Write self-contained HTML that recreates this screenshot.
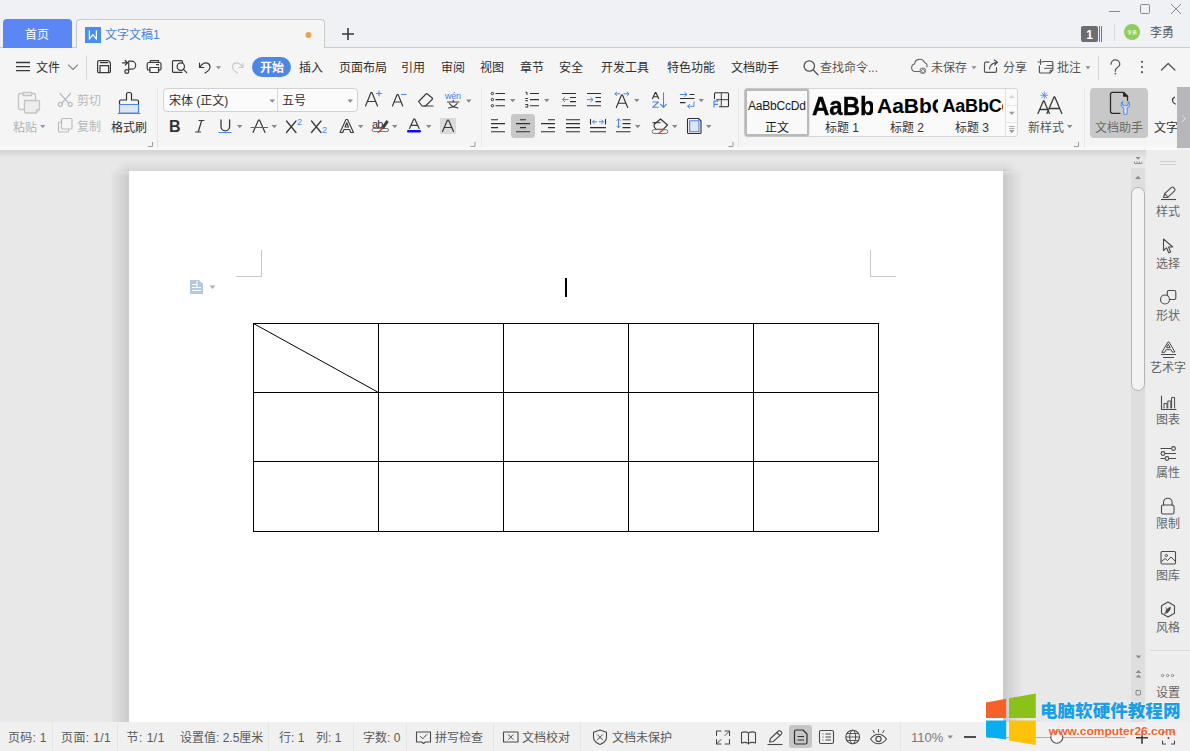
<!DOCTYPE html>
<html lang="zh-CN">
<head>
<meta charset="utf-8">
<title>文字文稿1</title>
<style>
*{box-sizing:border-box;margin:0;padding:0}
html,body{width:1190px;height:751px;overflow:hidden;background:#f5f5f5}
body{font-family:"Liberation Sans","Noto Sans CJK SC",sans-serif;font-size:12px;color:#333;position:relative}
.abs{position:absolute}
.t{position:absolute;white-space:nowrap;line-height:1}
svg{position:absolute;overflow:visible}
/* title bar */
#titlebar{left:0;top:0;width:1190px;height:47px;background:#f0f1f5}
#tabline{left:0;top:47px;width:1190px;height:1px;background:#cbcbcf}
#hometab{left:3px;top:19px;width:69px;height:29px;background:#5b87f5;border-radius:4px 4px 0 0}
#doctab{left:76px;top:19px;width:249px;height:29px;background:#f5f5f5;border:1px solid #c9c9cd;border-bottom:none;border-radius:4px 4px 0 0}
/* toolbar */
#toolbar{left:0;top:48px;width:1190px;height:102px;background:#f5f5f5}
#tbglow{left:0;top:144px;width:1177px;height:6px;background:linear-gradient(#f5f5f5,#fafafa)}
/* workspace */
#work{left:0;top:150px;width:1146px;height:572px;background:#e8e8e8}
#workshadow{left:0;top:150px;width:1146px;height:8px;background:linear-gradient(rgba(0,0,0,.09),rgba(0,0,0,0))}
#page{left:129px;top:171px;width:874px;height:560px;background:#fff}
#shl{left:109px;top:168px;width:20px;height:560px;background:linear-gradient(to right,rgba(0,0,0,0),rgba(0,0,0,.13));-webkit-mask-image:linear-gradient(transparent,#000 8px)}
#shr{left:1003px;top:168px;width:20px;height:560px;background:linear-gradient(to left,rgba(0,0,0,0),rgba(0,0,0,.13));-webkit-mask-image:linear-gradient(transparent,#000 8px)}
#sht{left:115px;top:159px;width:902px;height:12px;background:linear-gradient(rgba(0,0,0,0),rgba(0,0,0,.07));-webkit-mask-image:linear-gradient(to right,transparent,#000 14px,#000 888px,transparent)}
/* scrollbar */
#scroll{left:1131px;top:168px;width:14px;height:554px;background:#dedede}
#thumb{left:1131px;top:187px;width:14px;height:204px;background:#f3f3f3;border:1px solid #b4b4b4;border-radius:7px}
/* sidebar */
#side{left:1146px;top:150px;width:44px;height:572px;background:#ededed}
/* status */
#status{left:0;top:722px;width:1190px;height:29px;background:#f0f0f0}
</style>
</head>
<body>
<div class="abs" id="titlebar"></div>
<div class="abs" id="tabline"></div>
<div class="abs" id="hometab"></div>
<div class="abs" id="doctab"></div>
<div class="abs" id="toolbar"></div>
<div class="abs" id="tbglow"></div>
<div class="abs" id="work"></div>
<div class="abs" id="shl"></div><div class="abs" id="shr"></div><div class="abs" id="sht"></div>
<div class="abs" id="page"></div>
<div class="abs" id="workshadow"></div>
<div class="abs" id="scroll"></div>
<div class="abs" id="thumb"></div>
<div class="abs" id="side"></div>
<div class="abs" id="status"></div>

<!-- TITLE -->
<div class="t" style="left:25px;top:29px;font-size:12px;color:#fff">首页</div>
<svg style="left:85px;top:27px" width="16" height="16" viewBox="0 0 16 16"><rect width="16" height="16" fill="#4a8df1"/><path d="M4.400 3.600V12.200L7.900 7.600L11.400 12.200V3.600" stroke="#fff" stroke-width="1.200" fill="none" stroke-linejoin="round"/></svg>
<div class="t" style="left:105px;top:29px;font-size:12px;color:#4a7fdc">文字文稿1</div>
<svg style="left:0;top:0" width="1190" height="48" viewBox="0 0 1190 48">
 <circle cx="308.5" cy="35" r="3" fill="#e9a255"/>
 <path d="M342 34h12M348 28v12" stroke="#3a3a3a" stroke-width="1.6" fill="none"/>
 <path d="M1109 11.5h11" stroke="#8a8a8c" stroke-width="1" fill="none"/>
 <rect x="1140.5" y="4.500" width="9" height="9" rx="1" stroke="#8a8a8c" stroke-width="1" fill="none"/>
 <path d="M1171 4l10 10M1181 4l-10 10" stroke="#8a8a8c" stroke-width="1" fill="none"/>
 <rect x="1081" y="26" width="17" height="16" rx="2" fill="#6d6d70"/>
 <path d="M1099.500 26v16M1101.500 26v16" stroke="#77777a" stroke-width="1"/>
 <path d="M1114.500 24v17" stroke="#dadadc" stroke-width="1"/>
 <circle cx="1132" cy="32" r="8" fill="#90cc5c"/>
 <text x="1132" y="33.800" font-size="5" fill="#fff" text-anchor="middle" font-family="Liberation Sans, Noto Sans CJK SC, sans-serif">李勇</text>
 <text x="1089.500" y="38.500" font-size="12" font-weight="bold" fill="#fff" text-anchor="middle" font-family="Liberation Sans, sans-serif">1</text>
</svg>
<div class="t" style="left:1150px;top:27px;font-size:12px;color:#555">李勇</div>
<!-- MENU -->
<div class="abs" style="left:252px;top:57px;width:39px;height:20px;border-radius:10px;background:#4e86e6"></div>
<div class="t" style="left:260px;top:62px;color:#fff;font-weight:bold">开始</div>
<div class="t" style="left:36px;top:62px;color:#2f2f2f">文件</div>
<div class="t" style="left:299px;top:62px;color:#2f2f2f">插入</div>
<div class="t" style="left:339px;top:62px;color:#2f2f2f">页面布局</div>
<div class="t" style="left:401px;top:62px;color:#2f2f2f">引用</div>
<div class="t" style="left:441px;top:62px;color:#2f2f2f">审阅</div>
<div class="t" style="left:480px;top:62px;color:#2f2f2f">视图</div>
<div class="t" style="left:520px;top:62px;color:#2f2f2f">章节</div>
<div class="t" style="left:559px;top:62px;color:#2f2f2f">安全</div>
<div class="t" style="left:601px;top:62px;color:#2f2f2f">开发工具</div>
<div class="t" style="left:667px;top:62px;color:#2f2f2f">特色功能</div>
<div class="t" style="left:731px;top:62px;color:#2f2f2f">文档助手</div>
<div class="t" style="left:820px;top:62px;color:#555">查找命令...</div>
<div class="t" style="left:931px;top:62px;color:#555">未保存</div>
<div class="t" style="left:1003px;top:62px;color:#555">分享</div>
<div class="t" style="left:1057px;top:62px;color:#555">批注</div>
<svg style="left:0;top:48px" width="1190" height="38" viewBox="0 48 1190 38" fill="none" stroke="#3a3a3a" stroke-width="1.2" stroke-linecap="round" stroke-linejoin="round">
 <path d="M16 62.500h14M16 66.600h14M16 70.700h14" stroke-width="1.300" stroke-linecap="butt"/>
 <path d="M68.500 65l4.500 4.500l4.500-4.500" stroke="#8a8a8a" stroke-width="1.100"/>
 <path d="M86.500 55.500v24" stroke="#d6d6d6" stroke-width="1" stroke-linecap="butt"/>
 <!-- save -->
 <path d="M97.600 71.600v-9.600q0-1.400 1.400-1.400h8.600q.8 0 1.400.6l.8.800q.6.600.6 1.400v8.200q0 1-1 1h-10.800q-1 0-1-1z"/>
 <path d="M100 72.400v-6.800h8.600v6.800M100.500 62.600h7.300"/>
 <!-- export -->
 <path d="M122.500 62.800h4.800M125.200 60.500l2.400 2.300l-2.400 2.300"/>
 <path d="M128.700 61.200h3a4 4 0 0 1 0 8h-3M128.700 61.200v9"/>
 <circle cx="126.800" cy="71.500" r="1.900"/>
 <!-- print -->
 <path d="M150.300 62.500v-1.800h8.200v1.800M150 70h-1.200q-1.600 0-1.600-1.600v-4.300q0-1.600 1.600-1.600h10.600q1.600 0 1.600 1.600v4.300q0 1.600-1.600 1.600h-1.200"/>
 <path d="M149.800 67.500h8.900v4q0 1-1 1h-6.900q-1 0-1-1zM156.500 64.700h2"/>
 <!-- preview -->
 <path d="M182 72.300h-8.500q-1 0-1-1v-9.700q0-1 1-1h8q1 0 1 1v1.300"/>
 <circle cx="180.800" cy="66.600" r="3.700"/>
 <path d="M183.500 69.400l3.200 3.300"/>
 <!-- undo -->
 <path d="M199.500 63.200v4.300h4.300"/>
 <path d="M200 67q2.500-4.400 6.400-4.200a4 4 0 0 1 3.600 4.400q-.3 3.200-5 5.800"/>
 <path d="M216 66.200h5l-2.500 3z" fill="#8a8a8a" stroke="none"/>
 <!-- redo -->
 <g stroke="#c9c9c9"><path d="M243 63.200v4.300h-4.300"/><path d="M242.500 67q-2.500-4.400-6.400-4.200a4 4 0 0 0-3.600 4.400q.3 3.200 5 5.800"/></g>
 <!-- search -->
 <g stroke="#555" stroke-width="1.300"><circle cx="809.300" cy="66" r="5.200"/><path d="M813.200 70l4.800 4.800"/></g>
 <!-- cloud -->
 <g stroke="#666" stroke-width="1.100"><path d="M919.500 71.500h-4.300a3.800 3.800 0 0 1-.6-7.500a5.200 5.200 0 0 1 10-1.400a3.800 3.800 0 0 1 2.300 4.400"/></g>
 <circle cx="922.800" cy="70.800" r="3.300" fill="#8c8c8c" stroke="none"/>
 <path d="M921.500 69.500l2.600 2.600M924.100 69.500l-2.600 2.600" stroke="#fff" stroke-width=".9"/>
 <path d="M971.500 66.200h5l-2.500 3z" fill="#8a8a8a" stroke="none"/>
 <!-- share -->
 <g stroke="#555" stroke-width="1.200"><path d="M989 62.200h-3.200q-1.300 0-1.300 1.300v7.500q0 1.300 1.300 1.300h9.400q1.300 0 1.300-1.300v-3.500"/><path d="M989.500 69q.3-5.800 7.700-6.600M994.300 60l3.200 2.300l-2.800 2.800"/></g>
 <!-- comment -->
 <g stroke="#555" stroke-width="1.200"><path d="M1043.500 61.500h8q1.300 0 1.300 1.300v7.400l-2.800 2.800h-9.300q-1.300 0-1.300-1.300v-5.700"/><path d="M1038 62h5M1040.500 59.500v5M1044.500 68.300h7.500M1047 65.500h5" stroke-width="1"/><path d="M1052.600 70.300h-2.500v2.500" stroke-width="1"/></g>
 <path d="M1085.500 66.200h5l-2.500 3z" fill="#8a8a8a" stroke="none"/>
 <path d="M1098.500 56v24" stroke="#d6d6d6" stroke-width="1" stroke-linecap="butt"/>
 <!-- help -->
 <path d="M1111 64.200a4.400 4.400 0 0 1 8.800 0q0 2-2.400 3.300q-2 1.100-2 3.200v.5" stroke="#555" stroke-width="1.300"/>
 <circle cx="1115.400" cy="73.600" r=".9" fill="#555" stroke="none"/>
 <g fill="#555" stroke="none"><circle cx="1142" cy="61.800" r="1.100"/><circle cx="1142" cy="67" r="1.100"/><circle cx="1142" cy="72.200" r="1.100"/></g>
 <path d="M1161.500 70l6.700-6.500l6.700 6.500" stroke="#555" stroke-width="1.300"/>
</svg>
<!-- RIBBON -->
<div class="t" style="left:13px;top:122px;color:#b3b3b3">粘贴</div>
<div class="t" style="left:77px;top:95px;color:#b8b8b8">剪切</div>
<div class="t" style="left:77px;top:121px;color:#b8b8b8">复制</div>
<div class="t" style="left:111px;top:122px;color:#2f2f2f">格式刷</div>
<div class="abs" style="left:163px;top:88px;width:195px;height:24px;border:1px solid #d2d2d2;border-radius:4px;background:#fbfbfb"></div>
<div class="abs" style="left:277px;top:89px;width:1px;height:22px;background:#d8d8d8"></div>
<div class="t" style="left:169px;top:95px;color:#2f2f2f">宋体 (正文)</div>
<div class="t" style="left:282px;top:95px;color:#2f2f2f">五号</div>
<svg style="left:0;top:86px" width="480" height="64" viewBox="0 86 480 64" fill="none" stroke="#3a3a3a" stroke-width="1.200" stroke-linecap="round" stroke-linejoin="round">
 <!-- paste (disabled) -->
 <g stroke="#c4c4c4" stroke-width="1.300">
  <path d="M24 109.500h-3.500q-2 0-2-2v-12q0-2 2-2h2M31.500 93.500h2q2 0 2 2v4"/>
  <path d="M23 92.500h8.500v3h-8.500z"/>
  <path d="M24.500 100.500h13.500q1.500 0 1.500 1.500v7.500l-3.500 3.500h-10q-1.500 0-1.500-1.500z" fill="#ededed"/>
  <path d="M39.300 109.600h-3v3" stroke-width="1"/>
 </g>
 <path d="M40 125h5.500l-2.750 3.200z" fill="#9a9a9a" stroke="none"/>
 <!-- cut -->
 <g stroke="#bcbcbc" stroke-width="1.200">
  <path d="M60 93.500l9 10M70.500 93.500l-9 10"/><circle cx="60.300" cy="104.300" r="2"/><circle cx="70.200" cy="104.300" r="2"/>
 </g>
 <!-- copy -->
 <g stroke="#bcbcbc" stroke-width="1.200">
  <path d="M62.500 118.500h8.500q1 0 1 1v8.500q0 1-1 1h-8.500q-1 0-1-1v-8.500q0-1 1-1z"/>
  <path d="M61.500 122h-2q-1 0-1 1v8q0 1 1 1h8q1 0 1-1v-2"/>
 </g>
 <!-- format painter -->
 <path d="M119.500 104.500v-3q0-1.500 1.500-1.500h5.500v-5.500q0-2 2-2h1q2 0 2 2v5.500h5.500q1.500 0 1.500 1.500v3" stroke="#2f2f2f" stroke-width="1.200"/>
 <path d="M119.500 104.500h19v8.500h-19z" fill="#dfe6f3" stroke="#4a86e8" stroke-width="1.200"/>
 <path d="M118 113.500h22" stroke="#4a86e8" stroke-width="1.200"/>
 <!-- group marker -->
 <path d="M148 146.500h4.500v-4.500" stroke="#9c9c9c" stroke-width="1" stroke-linecap="butt" stroke-linejoin="miter"/>
 <path d="M157.500 88v60" stroke="#e6e6e6" stroke-width="1" stroke-linecap="butt"/>
 <!-- combo arrows -->
 <path d="M269.500 99.500h5.500l-2.750 3.200zM347.500 99.500h5.500l-2.750 3.200z" fill="#8a8a8a" stroke="none"/>
 <!-- A+ -->
 <path d="M365.500 106l5.500-13.500h1l5.500 13.500M367.500 101.500h8" stroke-width="1.200"/>
 <path d="M376.500 93.500h5M379 91v5" stroke="#4a86e8" stroke-width="1"/>
 <!-- A- -->
 <path d="M392.500 106l4.600-11.500h1l4.600 11.500M394.300 102h6.400" stroke-width="1.200"/>
 <path d="M401.500 94.500h4.500" stroke="#4a86e8" stroke-width="1"/>
 <!-- eraser -->
 <path d="M418.600 101.500l7.400-7.500q.7-.7 1.400 0l4.800 4q.7.700 0 1.400l-6.700 6.600h-3.400z" stroke-width="1.200"/>
 <path d="M424 106h9" stroke-width="1.200"/>
 <!-- wen arrow -->
 <path d="M466 99.500h5.500l-2.750 3.200z" fill="#8a8a8a" stroke="none"/>
 <path d="M447.500 102h11.500" stroke-width="1.100"/><path d="M449.500 103.500q1.500 3 8.500 4.500M457 103.500q-1.500 3-8.500 4.500M453.200 100.300v1.500" stroke-width="1.100"/>
 <!-- row2 -->
 <!-- I -->
 <path d="M199 120.500h5M195.500 132h5M201.700 120.500l-3.500 11.500" stroke-width="1.200"/>
 <!-- U -->
 <path d="M221 120v6.500a4.300 4.300 0 0 0 8.600 0v-6.500" stroke-width="1.300"/>
 <path d="M219 132.500h12" stroke="#4a86e8" stroke-width="1.200"/>
 <path d="M237 125h5.500l-2.750 3.200zM271.500 125h5.500l-2.750 3.200zM358 125h5.500l-2.750 3.200zM392 125h5.500l-2.750 3.200zM426 125h5.500l-2.750 3.200z" fill="#8a8a8a" stroke="none"/>
 <!-- A strike -->
 <path d="M253 132.500l5.500-12.500h1l5.500 12.500" stroke-width="1.200"/>
 <path d="M251 127.500h16.500" stroke="#d9352c" stroke-width="1.200"/>
 <!-- X2 sup -->
 <path d="M286.500 121l9.500 11.500M296 121l-9.500 11.500" stroke-width="1.300"/>
 <!-- X2 sub -->
 <path d="M311.500 121l9.500 11.500M321 121l-9.500 11.500" stroke-width="1.300"/>
 <!-- A outline -->
 <path d="M340 132.500l6-13h1.500l6 13h-2.800l-1.200-3h-5.500l-1.200 3zM345 127h3.500l-1.750-4.300z" stroke-width="1.100"/>
 <!-- highlighter ab -->
 <path d="M373.500 128.500h13.500q1.500 0 1.500 1.500t-1.500 1.500h-13.500q-1.500 0-1.500-1.500t1.500-1.500z" stroke="#7a7a7a" stroke-width="1"/>
 <path d="M378 132.500l5-4.500" stroke="#d9352c" stroke-width="1.100"/>
 <path d="M382 127l4.500-6.500l1.800 1.300l-4.300 6.500z" fill="#3a3a3a" stroke-width=".8"/>
 <!-- A blue underline -->
 <path d="M409.500 128.500l4.300-9.500h1l4.300 9.500M411 125.300h6.600" stroke-width="1.200"/>
 <path d="M408.200 131.300h11.600" stroke="#0a0aff" stroke-width="2.400"/>
 <!-- A shaded -->
 <rect x="440" y="118" width="16" height="16" fill="#dadada" stroke="none"/>
 <path d="M442.500 131.500l5-11.500h1l5 11.500M444.300 127.500h7.400" stroke-width="1.200"/>
 <path d="M470.500 146.500h4.500v-4.500" stroke="#9c9c9c" stroke-width="1" stroke-linecap="butt" stroke-linejoin="miter"/>
</svg>
<div class="t" style="left:169px;top:119px;font-size:16px;font-weight:bold;color:#333;font-family:'Liberation Sans',sans-serif">B</div>
<div class="t" style="left:297px;top:118px;font-size:9px;color:#4a86e8">2</div>
<div class="t" style="left:322px;top:126px;font-size:9px;color:#4a86e8">2</div>
<div class="t" style="left:445px;top:92px;font-size:9px;color:#3f7fe8;letter-spacing:-.3px">wén</div>
<div class="t" style="left:372px;top:119px;font-size:11px;color:#333;letter-spacing:-.8px">ab</div>
<svg style="left:480px;top:86px" width="262" height="64" viewBox="480 86 262 64" fill="none" stroke="#2f2f2f" stroke-width="1.100" stroke-linecap="butt" stroke-linejoin="round">
 <path d="M481.500 88v60" stroke="#ebebeb" stroke-width="1"/>
 <!-- bullets -->
 <g stroke-width="1"><circle cx="492.400" cy="93.500" r="1.200"/><circle cx="492.400" cy="99.600" r="1.200"/><circle cx="492.400" cy="105.700" r="1.200"/></g>
 <path d="M495.500 93.500h9.500M495.500 99.600h9.500M495.500 105.700h9.500"/>
 <path d="M510 99h5.500l-2.750 3.200zM544 99h5.500l-2.750 3.200zM634 99h5.500l-2.750 3.200zM698.500 99h5.500l-2.750 3.200zM635 125h5.500l-2.750 3.200zM672 125h5.500l-2.750 3.200zM706 125h5.500l-2.750 3.200z" fill="#8a8a8a" stroke="none"/>
 <!-- numbering -->
 <path d="M530 93.500h9M530 99.600h9M530 105.700h9"/>
 <path d="M525.500 92.300h1.500v2.700M525.300 98.500h2.600M525.300 100.700h2.600M525.300 104.500h2.500v2.500h-2.500" stroke-width="1"/>
 <!-- decrease indent -->
 <path d="M562 93.500h14M570 97.500h6M570 101.600h6M562 105.700h14"/>
 <path d="M562.500 99.600h6M565 97.200l-2.500 2.400l2.500 2.400" stroke="#4a86e8" stroke-width="1"/>
 <!-- increase indent -->
 <path d="M587 93.500h14M595.500 97.500h5.500M595.500 101.600h5.500M587 105.700h14"/>
 <path d="M587 99.600h6M590.500 97.200l2.500 2.400l-2.500 2.400" stroke="#4a86e8" stroke-width="1"/>
 <!-- A spacing -->
 <path d="M616.300 107.500l5.200-12.500h1l5.200 12.500M618 103.300h8" stroke-linecap="round"/>
 <path d="M614.800 93.800h5.500M617 91.800l-2.200 2l2.200 2M623.500 93.800h5.500M626.800 91.800l2.200 2l-2.200 2" stroke="#4a86e8" stroke-width="1"/>
 <!-- AZ -->
 <path d="M652.300 99l3-6.500h.6l3 6.500M653.300 96.800h4.600" stroke-width="1.100"/>
 <path d="M652.500 102h6l-6 5.300h6.300" stroke="#4a86e8" stroke-width="1.100"/>
 <path d="M663.500 92.500v14.500M660.300 104l3.200 3.300l3.200-3.300" stroke="#4a86e8" stroke-width="1.100"/>
 <!-- line break -->
 <path d="M689.500 94.500h5M680 98.500h14.500M680 102.600h5.500"/>
 <path d="M680 94.500h7M684.500 92.300l2.500 2.200l-2.500 2.200M694 101.500v4.800h-6.500M690 104l-2.500 2.300l2.500 2.300" stroke="#4a86e8" stroke-width="1"/>
 <!-- table -->
 <path d="M716.500 92.800h11q1 0 1 1v12q0 1-1 1h-8.500M714.500 99v-5.200q0-1 1-1h1"/>
 <path d="M721.300 93v13.500M716 99.700h12.500" stroke-width=".9"/>
 <path d="M714 107.500v-6.300h4.500M714 104.300h4" stroke="#4a86e8" stroke-width="1.200"/>
 <!-- align left -->
 <path d="M491 119.700h7M491 123.600h14M491 127.600h7M491 131.700h14"/>
 <!-- center -->
 <rect x="511" y="114" width="24" height="24" rx="3" fill="#c8c8c8" stroke="none"/>
 <path d="M520 119.700h6M516 123.600h14M520 127.600h6M516 131.700h14"/>
 <!-- right -->
 <path d="M548 119.700h7M541 123.600h14M548 127.600h7M541 131.700h14"/>
 <!-- justify -->
 <path d="M566 119.700h14M566 123.600h14M566 127.600h14M566 131.700h14"/>
 <!-- distribute -->
 <path d="M590.500 119v5.500M605.500 119v5.500M590 127.600h16M590 131.700h16"/>
 <path d="M592.500 121.800h4.500M594.500 119.800l-2 2l2 2M599 121.800h4.500M601.500 119.800l2 2l-2 2" stroke="#4a86e8" stroke-width="1"/>
 <!-- line spacing -->
 <path d="M622.500 119.700h8M622.500 123.600h8M622.500 127.600h8M616 131.700h14.500"/>
 <path d="M618.500 118.800v9M616.500 120.800l2-2l2 2M616.500 125.800l2 2l2-2" stroke="#4a86e8" stroke-width="1"/>
 <!-- shading bucket -->
 <path d="M654 124.500l6.500-5.500l7 6l-4 4.200h-7.500q-2.500-2-2-4.700z" stroke-linejoin="round"/>
 <path d="M652.500 122.700h8" stroke-width="1"/>
 <path d="M654 129.700h12q1.800 0 1.800 1.900t-1.800 1.900h-12q-1.800 0-1.800-1.900t1.800-1.900z" stroke="#7a7a7a" stroke-width="1"/>
 <path d="M658.500 133.500l5-3.800" stroke="#d9352c" stroke-width="1.100"/>
 <!-- border -->
 <path d="M688.500 118.500h10l2.500 2.500v11.500q0 1-1 1h-11.500q-1 0-1-1v-13q0-1 1-1z"/>
 <rect x="689.700" y="120.700" width="9.200" height="11" fill="#dfe6f3" stroke="#4a86e8" stroke-width="1.100"/>
 <path d="M728.500 146.500h4.500v-4.500" stroke="#9c9c9c" stroke-width="1"/>
 <path d="M738.500 88v60" stroke="#e6e6e6" stroke-width="1"/>
</svg>
<div class="abs" style="left:744px;top:88px;width:274px;height:49px;border:1px solid #d6d6d6;border-radius:3px;background:#fafafa"></div>
<div class="abs" style="left:745px;top:89px;width:64px;height:47px;border:2px solid #b9b9b9;border-radius:2px;background:#f9f9f9;box-shadow:0 0 2px rgba(0,0,0,.25)"></div>
<div class="abs" style="left:1005px;top:89px;width:1px;height:47px;background:#e2e2e2"></div>
<div class="abs" style="left:1006px;top:105px;width:11px;height:1px;background:#e6e6e6"></div>
<div class="abs" style="left:1006px;top:122px;width:11px;height:1px;background:#e6e6e6"></div>
<div class="t" style="left:748px;top:100px;font-family:'Liberation Sans',sans-serif;font-size:12px;color:#1a1a1a;letter-spacing:-.2px">AaBbCcDd</div>
<div class="t" style="left:765px;top:122px;color:#1a1a1a">正文</div>
<div class="abs" style="left:811px;top:90px;width:62px;height:30px;overflow:hidden"><div class="t" style="left:1px;top:3.500px;font-family:'Liberation Sans',sans-serif;font-size:24px;font-weight:bold;color:#000;-webkit-text-stroke:.3px #000;transform:scale(1,1.05);transform-origin:0 0">AaBb</div></div>
<div class="abs" style="left:876px;top:90px;width:62px;height:30px;overflow:hidden"><div class="t" style="left:1px;top:4.500px;font-family:'Liberation Sans',sans-serif;font-size:21px;font-weight:bold;color:#000">AaBbC</div></div>
<div class="abs" style="left:941px;top:90px;width:62px;height:30px;overflow:hidden"><div class="t" style="left:1.500px;top:7px;letter-spacing:-.2px;font-family:'Liberation Sans',sans-serif;font-size:18px;font-weight:bold;color:#000">AaBbCc</div></div>
<div class="t" style="left:825px;top:122px;color:#333">标题 1</div>
<div class="t" style="left:890px;top:122px;color:#333">标题 2</div>
<div class="t" style="left:955px;top:122px;color:#333">标题 3</div>
<div class="t" style="left:1028px;top:122px;color:#555">新样式</div>
<div class="abs" style="left:1090px;top:88px;width:58px;height:50px;border-radius:4px;background:#c8c8c8"></div>
<div class="t" style="left:1095px;top:122px;color:#6a6a6a">文档助手</div>
<div class="t" style="left:1154px;top:122px;color:#333">文字</div>
<div class="abs" style="left:1177px;top:87px;width:13px;height:61px;background:#b7b7bb"></div>
<svg style="left:1000px;top:86px" width="190" height="64" viewBox="1000 86 190 64" fill="none" stroke="#3a3a3a" stroke-width="1.200" stroke-linecap="round" stroke-linejoin="round">
 <path d="M1009 98h5.500l-2.750-3.200z" fill="#d4d4d4" stroke="none"/>
 <path d="M1009 111.800h5.500l-2.750 3.200z" fill="#9a9a9a" stroke="none"/>
 <path d="M1009 130h5.500l-2.750 3.200z" fill="#9a9a9a" stroke="none"/>
 <path d="M1009 126.500h5.500M1009 128.500h5.500" stroke="#9a9a9a" stroke-width=".8" stroke-linecap="butt"/>
 <!-- new style -->
 <path d="M1038 113.500l5.300-12.500h.8l5.300 12.500M1040 109.500h7.400" stroke-width="1.300"/>
 <path d="M1047 113.500l7-16.500h.8l7 16.500M1049.500 108.500h10" stroke-width="1.300"/>
 <path d="M1044.300 91.800v7M1040.800 95.300h7M1041.800 92.800l5 5M1046.800 92.800l-5 5" stroke="#4a86e8" stroke-width=".8"/>
 <path d="M1067 125h5.500l-2.750 3.200z" fill="#8a8a8a" stroke="none"/>
 <path d="M1074 146.500h4.500v-4.500" stroke="#9c9c9c" stroke-width="1" stroke-linecap="butt" stroke-linejoin="miter"/>
 <path d="M1084.500 88v60" stroke="#e6e6e6" stroke-width="1" stroke-linecap="butt"/>
 <!-- doc assistant -->
 <path d="M1120 113.300h-7.500q-2 0-2-2v-17q0-2 2-2h11l4 4v4" stroke="#2a2a2a" stroke-width="1.300"/>
 <path d="M1123.500 92.500v3.800h3.800z" stroke="#2a2a2a" stroke-width="1" fill="#2a2a2a"/>
 <path d="M1122.700 101.500q-1.800 1.300-1.600 3.500q.3 2.200 2.600 3v5.200q0 1.300 1.700 1.300t1.700-1.300v-5.200q2.300-.8 2.600-3q.2-2.200-1.600-3.500v3.300l-1.300 1h-2.800l-1.300-1z" stroke="#5b8de8" stroke-width="1.100" fill="#dbe5f7"/>
 <!-- fragment -->
 <path d="M1174.500 97.200q-2.300 1-2 3.500q.3 2.500 3 3.300" stroke="#3a3a3a" stroke-width="1.200"/>
 <path d="M1182.300 115.500l3 3l-3 3" stroke="#e6e6e8" stroke-width="1"/>
</svg>
<!-- RIBBON4 -->
<!-- DOC -->
<svg style="left:0;top:0" width="1190" height="751" viewBox="0 0 1190 751" shape-rendering="crispEdges">
 <g stroke="#000" stroke-width="1" fill="none">
  <path d="M253.5 323.5H878.5V531.5H253.5Z"/>
  <path d="M253.5 392.5H878.5M253.5 461.5H878.5M378.5 323.5V531.5M503.5 323.5V531.5M628.5 323.5V531.5M753.5 323.5V531.5"/>
 </g>
 <path d="M253.5 323.5L378.5 392.5" stroke="#000" stroke-width="1" fill="none" shape-rendering="auto"/>
 <rect x="565" y="278" width="2" height="19" fill="#000"/>
 <g stroke="#c8c8c8" stroke-width="1" fill="none">
  <path d="M261.5 250V276.5H236"/>
  <path d="M870.5 250V276.5H896"/>
 </g>
 <g shape-rendering="auto">
  <path d="M190 280h9l4 4v10h-13z" fill="#b4c7e7"/>
  <path d="M192 284.5h5M192 287.5h9M192 290.5h9M197 281v6" stroke="#fff" stroke-width="1" fill="none"/>
  <path d="M209.5 285.5h6l-3 3.5z" fill="#b0b0b0"/>
 </g>
</svg>
<!-- SIDE -->
<div class="t" style="left:1156.0px;top:206px;color:#666">样式</div>
<div class="t" style="left:1156.0px;top:258px;color:#666">选择</div>
<div class="t" style="left:1156.0px;top:310px;color:#666">形状</div>
<div class="t" style="left:1150.0px;top:362px;color:#666">艺术字</div>
<div class="t" style="left:1156.0px;top:414px;color:#666">图表</div>
<div class="t" style="left:1156.0px;top:467px;color:#666">属性</div>
<div class="t" style="left:1156.0px;top:518px;color:#666">限制</div>
<div class="t" style="left:1156.0px;top:570px;color:#666">图库</div>
<div class="t" style="left:1156.0px;top:622px;color:#666">风格</div>
<div class="t" style="left:1156.0px;top:687px;color:#666">设置</div>
<svg style="left:1128px;top:150px" width="62" height="572" viewBox="1128 150 62 572" fill="none" stroke="#4a4a4a" stroke-width="1.100" stroke-linecap="round" stroke-linejoin="round">
 <!-- ruler toggle -->
 <path d="M1135.500 157h5l-2.500 2.800z" fill="#8a8a8a" stroke="none"/>
 <path d="M1134.500 163.500h7.500M1134.500 161.500v2M1137 161.500v2M1139.500 161.500v2M1142 161.500v2" stroke="#8a8a8a" stroke-width=".9" stroke-linecap="butt"/>
 <path d="M1135 179h6l-3-3.200z" fill="#8a8a8a" stroke="none"/>
 <path d="M1135.700 655.500h5.600l-2.800 3z" fill="#8a8a8a" stroke="none"/>
 <path d="M1135.700 673h5.600l-2.800-3zM1135.700 677.500h5.600l-2.800-3z" fill="#8a8a8a" stroke="none"/>
 <rect x="1136" y="690.500" width="4.500" height="4.500" rx=".8" stroke="#7a7a7a" stroke-width=".9"/>
 <!-- handle -->
 <path d="M1160 161.500h16M1160 164.500h16" stroke="#cfcfcf" stroke-width="1" stroke-linecap="butt"/>
 <!-- style pen -->
 <path d="M1161 199.500h15" stroke-linecap="butt"/>
 <path d="M1163.500 197.500l1.200-3.800l6.800-6.300q1-.8 2 .2l1.200 1.300q.8 1-.1 2l-6.900 6.400z"/>
 <path d="M1164.800 193.800l3 3.300"/>
 <!-- select cursor -->
 <path d="M1163.500 239v11.500l3-2.700l2.200 5l2-.9l-2.200-4.900h4.200z"/>
 <!-- shapes -->
 <rect x="1167.300" y="290.500" width="8.500" height="9" rx="1.500"/>
 <circle cx="1165" cy="299.500" r="4.500" fill="#ededed"/>
 <!-- wordart -->
 <path d="M1162 352l6-10h1l6 10h-2.800l-1.300-2.400h-4.800l-1.300 2.400zM1166.800 347.600h3.400l-1.700-3z" stroke-width="1"/>
 <path d="M1161 354.500h15M1163 357.500h11" stroke-linecap="butt"/>
 <!-- chart -->
 <path d="M1161.500 396v13.500h14.500" />
 <path d="M1164 408v-4.500h3v4.500M1167.800 408v-7h3v7M1171.600 408v-10.500h3v10.500" stroke-width="1"/>
 <!-- properties -->
 <path d="M1160.500 448.500h11M1165 453.500h11M1160.500 458.500h4.500M1169 458.500h7" stroke-linecap="butt"/>
 <circle cx="1173.500" cy="448.500" r="1.900"/><circle cx="1163" cy="453.500" r="1.900"/><circle cx="1167" cy="458.500" r="1.900"/>
 <!-- lock -->
 <rect x="1161.500" y="505" width="12.500" height="9" rx="1.500"/>
 <path d="M1163.500 505v-2.500a4.300 4.300 0 0 1 8.600 0v2.500"/>
 <!-- image -->
 <rect x="1161" y="551.500" width="14.500" height="12.500" rx="1.200"/>
 <circle cx="1166.300" cy="555.500" r="1.200" stroke-width=".9"/>
 <path d="M1161.500 561.500l3.500-3l2.500 2l3.500-3.500l4 4" stroke-width="1"/>
 <!-- style hexagon -->
 <path d="M1168 602l6.500 3.750v7.500l-6.500 3.750l-6.500-3.750v-7.500z"/>
 <path d="M1165 613.500q2.500.3 5-3.500q.5-1 .5-3q-3.500 1-4.500 3.800q-.5 1.500-1 2.700zM1166 607.500q.5 2 .3 3.500" fill="#4a4a4a" stroke-width=".5"/>
 <!-- divider -->
 <path d="M1150 650.500h40" stroke="#dadada" stroke-width="1" stroke-linecap="butt"/>
 <!-- dots -->
 <g stroke="#8a8a8a" stroke-width=".9"><circle cx="1162.500" cy="675.500" r="1.200"/><circle cx="1167.500" cy="675.500" r="1.200"/><circle cx="1172.500" cy="675.500" r="1.200"/></g>
</svg>

<!-- STATUS -->
<div class="t" style="left:8px;top:732px;color:#5a5a5a;letter-spacing:.3px">页码: 1</div>
<div class="t" style="left:61px;top:732px;color:#5a5a5a;letter-spacing:.4px">页面: 1/1</div>
<div class="t" style="left:126.500px;top:732px;color:#5a5a5a;letter-spacing:.5px">节: 1/1</div>
<div class="t" style="left:180px;top:732px;color:#5a5a5a">设置值: 2.5厘米</div>
<div class="t" style="left:279px;top:732px;color:#5a5a5a">行: 1</div>
<div class="t" style="left:316px;top:732px;color:#5a5a5a">列: 1</div>
<div class="t" style="left:363px;top:732px;color:#5a5a5a">字数: 0</div>
<div class="t" style="left:435px;top:732px;color:#5a5a5a">拼写检查</div>
<div class="t" style="left:522px;top:732px;color:#5a5a5a">文档校对</div>
<div class="t" style="left:612px;top:732px;color:#5a5a5a">文档未保护</div>
<div class="t" style="left:911px;top:731px;color:#7a7a7a;font-size:13px;font-family:'Liberation Sans',sans-serif">110%</div>
<div class="abs" style="left:789px;top:725px;width:23px;height:23px;border-radius:3px;background:#c6c6c6"></div>
<svg style="left:0;top:722px" width="1190" height="29" viewBox="0 722 1190 29" fill="none" stroke="#4a4a4a" stroke-width="1.100" stroke-linecap="round" stroke-linejoin="round">
 <path d="M52.500 723v28M117.500 723v28M268.500 723v28M353.500 723v28M406.500 723v28M493.500 723v28M580.500 723v28M900.500 723v28" stroke="#e6e6e6" stroke-width="1" stroke-linecap="butt"/>
 <!-- spell -->
 <path d="M416.500 732h14v10h-5l-2 1.500l-2-1.500h-5z"/>
 <path d="M420.500 736.500l2.300 2.300l4-4.300" stroke-width="1"/>
 <!-- proof -->
 <path d="M503.500 732h14.500v10h-14.500z"/>
 <path d="M508.500 734.800l4.500 4.500M513 734.800l-4.500 4.500" stroke-width="1"/>
 <!-- shield -->
 <path d="M600 730l6.500 2.300v5q0 4.500-6.500 7.200q-6.500-2.700-6.500-7.200v-5z"/>
 <path d="M597.500 734.800l5 5M602.500 734.800l-5 5" stroke-width="1"/>
 <!-- fullscreen -->
 <path d="M716.500 735.500v-4.500h4.500M725 731h4.500v4.500M729.500 739.500v4.500h-4.500M721 744h-4.500v-4.500"/>
 <path d="M729 731.500l-4 4M717 743.500l4-4" stroke-width="1"/>
 <!-- book -->
 <path d="M748.500 733v11M741.500 732.500q4-1.500 7 .5q3-2 7-.5v10.500q-4-1.500-7 .5q-3-2-7-.5z"/>
 <!-- pen -->
 <path d="M767.500 744.500h15" stroke-linecap="butt"/>
 <path d="M769.500 742l1-3.500l8-7.500q1-.8 2 .1l1 1q.8 1-.1 2l-8.100 7.400z"/>
 <path d="M776.800 732.500l3 3"/>
 <!-- print layout -->
 <path d="M796 730h7l4 4v8.500q0 1.500-1.500 1.500h-9.500q-1.500 0-1.500-1.500v-11q0-1.500 1.500-1.500z" stroke="#2f2f2f" stroke-width="1.200"/>
 <path d="M797.500 736.500h6.500M797.500 740h6.500" stroke="#2f2f2f" stroke-width="1.200" stroke-linecap="butt"/>
 <!-- outline -->
 <rect x="819.500" y="730.500" width="14" height="13" rx="1.500"/>
 <path d="M822.500 734h1M825.500 734h5.500M822.500 737h1M825.500 737h5.500M822.500 740h1M825.500 740h5.500" stroke-width="1" stroke-linecap="butt"/>
 <!-- globe -->
 <circle cx="852.700" cy="737" r="6.800"/>
 <ellipse cx="852.700" cy="737" rx="3" ry="6.800" stroke-width="1"/>
 <path d="M846 737h13.500M847 733.500h11.500M847 740.500h11.500" stroke-width=".9"/>
 <!-- eye -->
 <path d="M870.500 739q3.500-4.800 8-4.800t8 4.800q-3.500 4.800-8 4.800t-8-4.800z"/>
 <circle cx="878.500" cy="739" r="2.600"/>
 <path d="M878.500 729.500v2.500M873 730.500l1.300 2.300M884 730.500l-1.300 2.300" stroke-width="1"/>
 <!-- zoom -->
 <path d="M947.500 735.500h5.500l-2.750 3.200z" fill="#8a8a8a" stroke="none"/>
 <path d="M964 737h12" stroke="#3a3a3a" stroke-width="1.800" stroke-linecap="butt"/>
 <path d="M986 737.500h139" stroke="#b0b0b0" stroke-width="1" stroke-linecap="butt"/>
 <circle cx="1056.800" cy="737.200" r="6" fill="#f8f8f8" stroke="#555" stroke-width="1.100"/>
 <path d="M1136 737.700h12M1142 731.700v12" stroke="#3a3a3a" stroke-width="1.600" stroke-linecap="butt"/>
 <!-- fit -->
 <path d="M1162.500 735v-3h3M1171.500 732h3v3M1174.500 741v3h-3M1165.500 744h-3v-3" stroke="#4a4a4a" stroke-width="1.100"/>
 <circle cx="1168.500" cy="738" r="1" fill="#4a4a4a" stroke="none"/>
</svg>

<!-- WATERMARK -->
<svg style="left:980px;top:690px" width="210" height="61" viewBox="980 690 210 61">
 <path d="M986 702.500l20.200-3.800v19.300h-20.200z" fill="#f4622a"/>
 <path d="M1009 698.200l26.800-4.700v24.500h-26.800z" fill="#8cc11a"/>
 <path d="M986 720.500h20.200v19l-20.200-2.800z" fill="#08aef0"/>
 <path d="M1009 720.500h26.800v24.500l-26.800-4.500z" fill="#fdc20a"/>
 <text x="1040" y="717" font-family="Liberation Sans, Noto Sans CJK SC, sans-serif" font-weight="900" font-size="17.500" fill="#1a9fe6" stroke="#fff" stroke-width="2" stroke-opacity=".35" paint-order="stroke" textLength="140.500" lengthAdjust="spacingAndGlyphs">电脑软硬件教程网</text>
 <text x="1048.800" y="734.600" font-family="Liberation Sans, sans-serif" font-weight="bold" font-size="11.800" fill="#f4622a" stroke="#fff" stroke-width="2" stroke-opacity=".4" paint-order="stroke" textLength="127" lengthAdjust="spacingAndGlyphs">www.computer26.com</text>
</svg>
</body>
</html>
